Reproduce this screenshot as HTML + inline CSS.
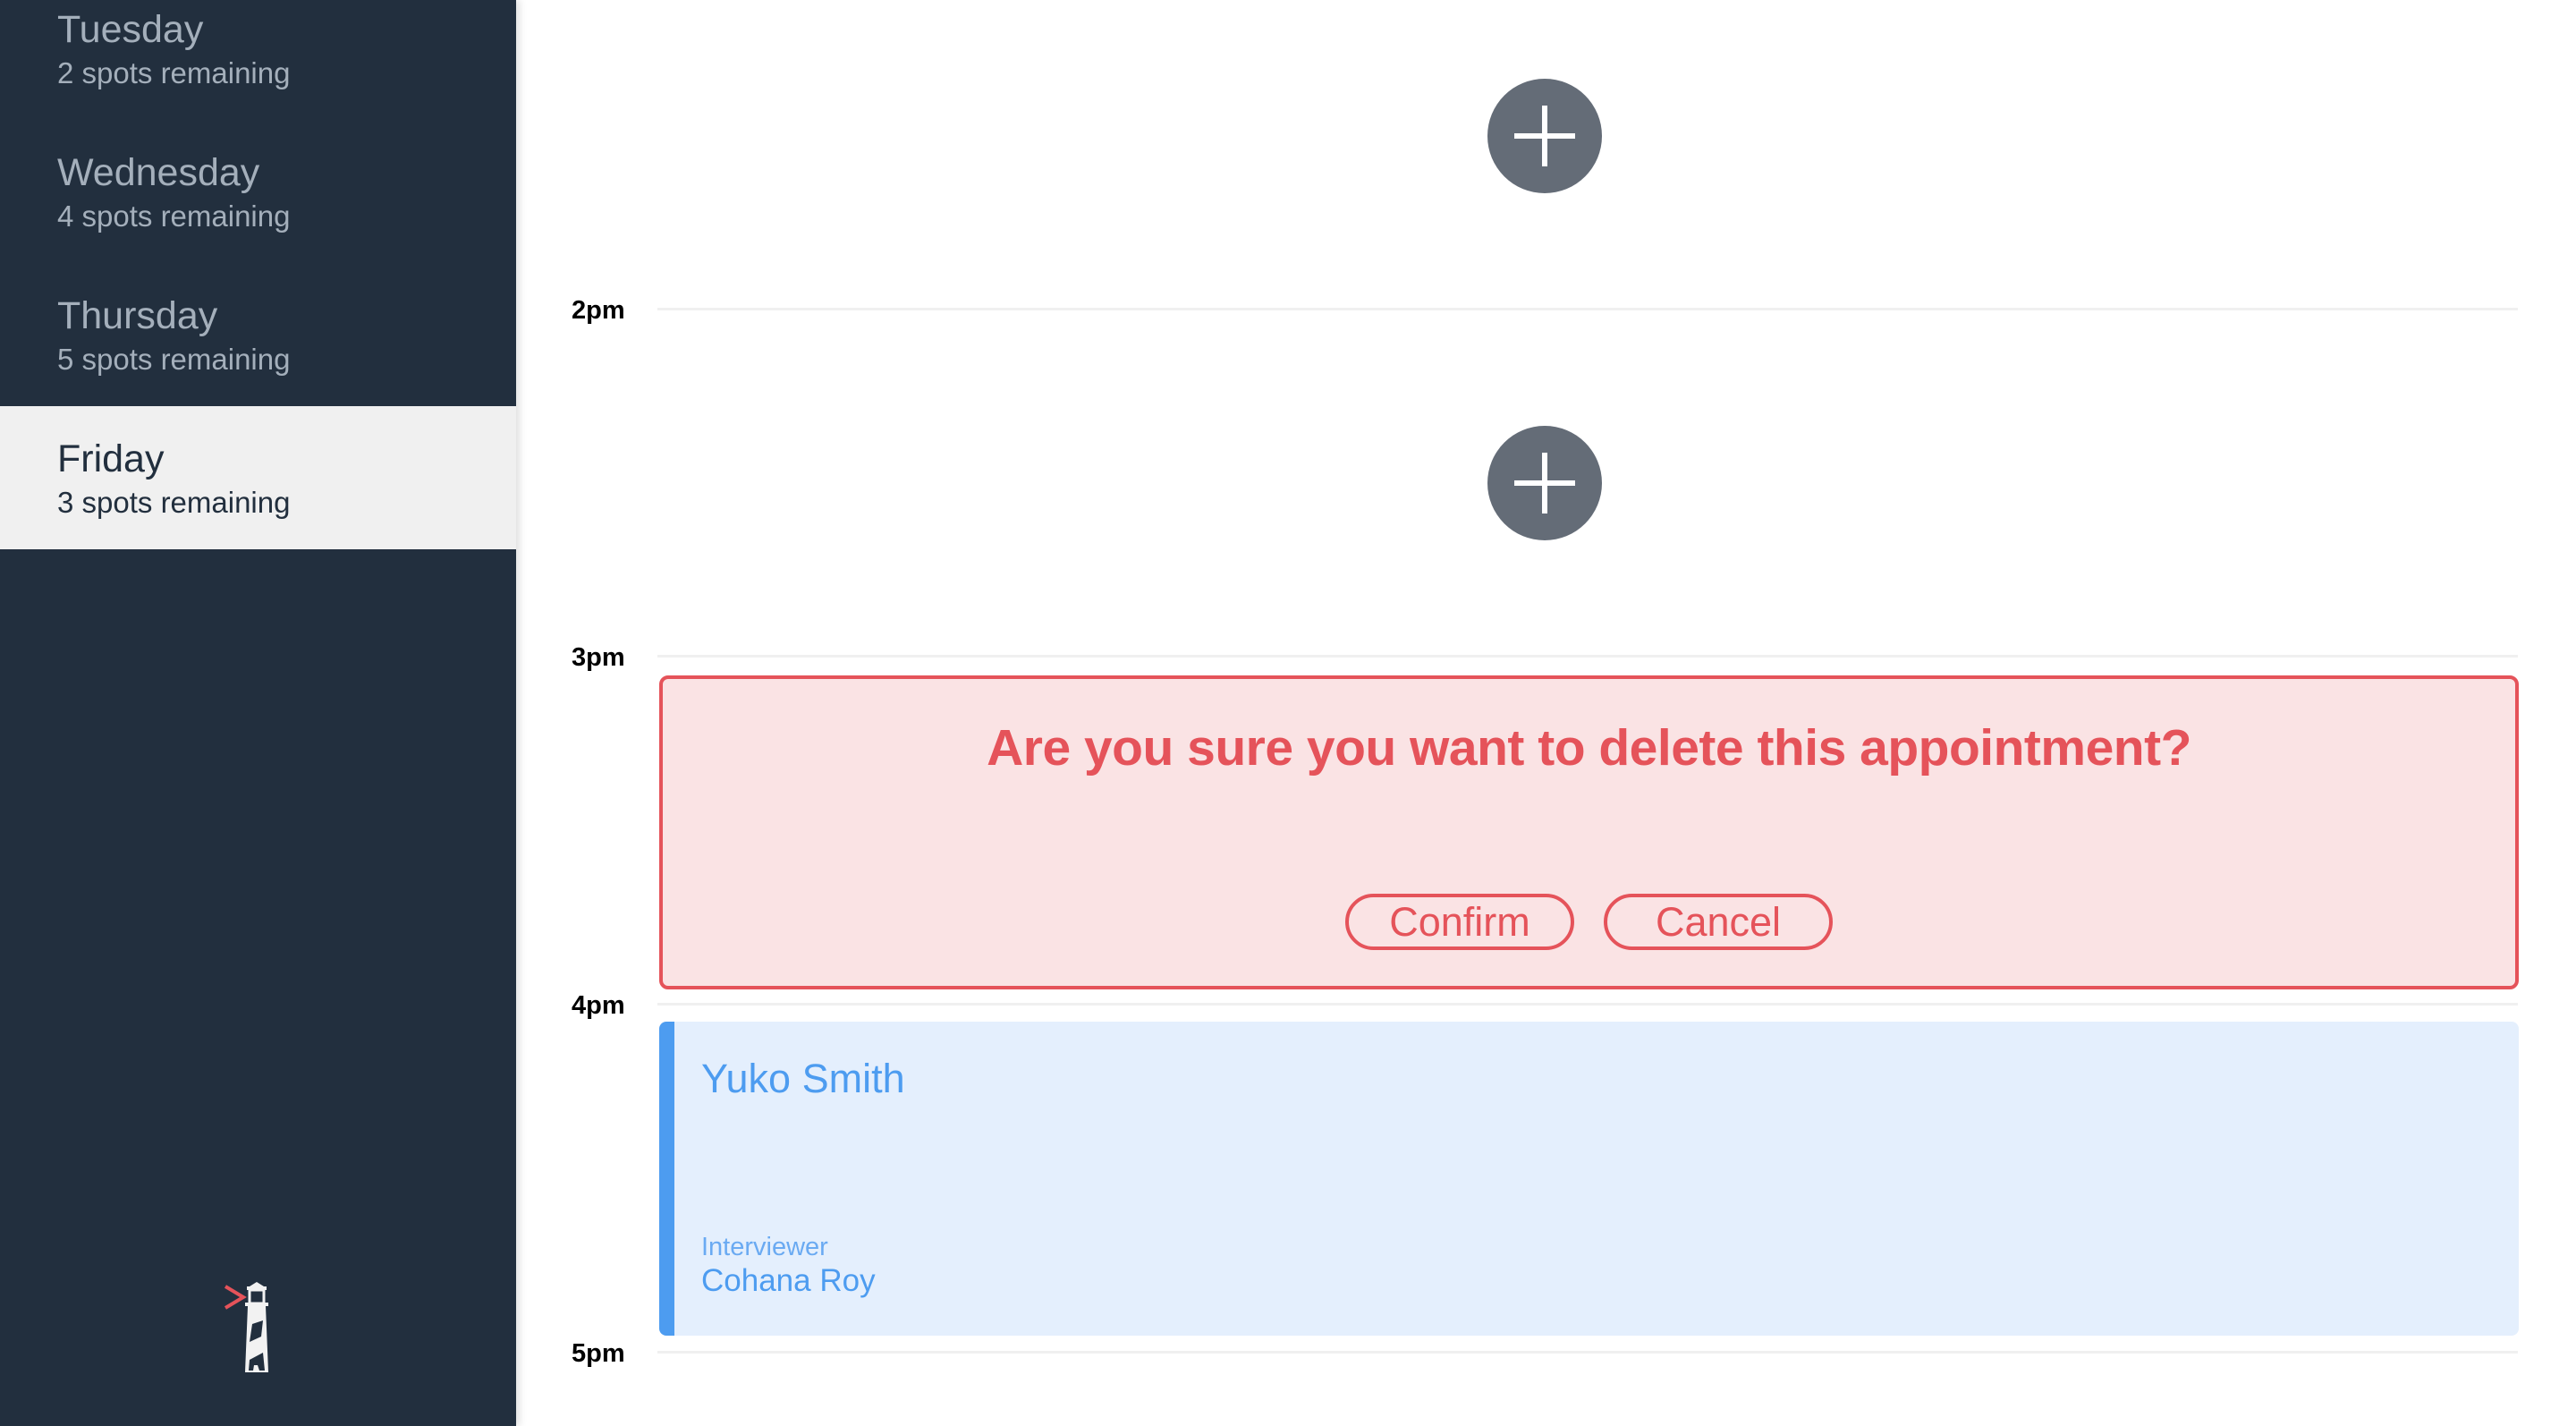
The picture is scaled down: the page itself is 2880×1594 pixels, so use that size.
<!DOCTYPE html>
<html><head><meta charset="utf-8"><style>
*{margin:0;padding:0;box-sizing:border-box}
body{width:2880px;height:1594px;overflow:hidden;background:#fff;font-family:"Liberation Sans",sans-serif;position:relative}
#side{position:absolute;left:0;top:0;width:577px;height:1594px;background:#222f3e;box-shadow:4px 0 8px rgba(0,0,0,.12);z-index:2}
.day{position:absolute;left:0;width:577px;height:160px}
.day .t{position:absolute;left:64px;top:34px;font-size:43px;color:#a4afbb;line-height:50px}
.day .s{position:absolute;left:64px;top:88px;font-size:33px;color:#a4afbb;line-height:40px}
.sel{background:#f0f0f0}
.sel .t,.sel .s{color:#222f3e}
.tl{position:absolute;left:639px;font-size:29px;font-weight:bold;color:#000;line-height:30px}
.ln{position:absolute;left:735px;width:2080px;height:3px;background:#f0f0f0}
.plus{position:absolute;left:1663px;width:128px;height:128px;border-radius:50%;background:#646c77}
.plus:before{content:"";position:absolute;left:30px;top:61px;width:68px;height:6px;background:#fff}
.plus:after{content:"";position:absolute;left:61px;top:30px;width:6px;height:68px;background:#fff}
#del{position:absolute;left:737px;top:755px;width:2079px;height:351px;background:#fae3e4;border:4px solid #e5535a;border-radius:10px}
#del h1{position:absolute;left:0;right:0;top:44px;text-align:center;font-size:57px;font-weight:bold;color:#e5535a;letter-spacing:-0.5px}
.btn{position:absolute;top:240px;width:256px;height:63px;border:4px solid #e5535a;border-radius:32px;color:#e5535a;font-size:45px;text-align:center;line-height:55px}
#ap{position:absolute;left:737px;top:1142px;width:2079px;height:351px;background:#e4effd;border-left:17px solid #4d9cf0;border-radius:8px}
</style></head><body>
<div id="side">
<div class="day" style="top:-26px"><div class="t">Tuesday</div><div class="s">2 spots remaining</div></div>
<div class="day" style="top:134px"><div class="t">Wednesday</div><div class="s">4 spots remaining</div></div>
<div class="day" style="top:294px"><div class="t">Thursday</div><div class="s">5 spots remaining</div></div>
<div class="day sel" style="top:454px"><div class="t">Friday</div><div class="s">3 spots remaining</div></div>
<svg style="position:absolute;left:246px;top:1432px" width="70" height="105" viewBox="0 0 70 105">
<polyline points="6,6 26,18 6,30" fill="none" stroke="#e5535a" stroke-width="4"/>
<polygon points="33,6 41,1 49,6" fill="#f2f2f2"/>
<rect x="30" y="6" width="22" height="4" fill="#f2f2f2"/>
<rect x="33" y="10" width="16" height="15" fill="none" stroke="#f2f2f2" stroke-width="3"/>
<rect x="28" y="24" width="26" height="4" fill="#f2f2f2"/>
<polygon points="31,28 51,28 54,102 28,102" fill="#f2f2f2"/>
<polygon points="36,48 48,44 46,62 33,68" fill="#222f3e"/>
<polygon points="33,88 48,80 50,100 44,100 42,94 38,94 37,100 32,100" fill="#222f3e"/>
</svg>
</div>
<div class="plus" style="top:88px"></div>
<div class="plus" style="top:476px"></div>
<div class="tl" style="top:332px">2pm</div><div class="ln" style="top:344px"></div>
<div class="tl" style="top:720px">3pm</div><div class="ln" style="top:732px"></div>
<div class="tl" style="top:1109px">4pm</div><div class="ln" style="top:1121px"></div>
<div class="tl" style="top:1498px">5pm</div><div class="ln" style="top:1510px"></div>
<div id="del"><h1>Are you sure you want to delete this appointment?</h1>
<div class="btn" style="left:763px">Confirm</div><div class="btn" style="left:1052px">Cancel</div></div>
<div id="ap">
<div style="position:absolute;left:30px;top:38px;font-size:45px;color:#4d9cf0">Yuko Smith</div>
<div style="position:absolute;left:30px;top:236px;font-size:29px;color:#6aaaf2">Interviewer</div>
<div style="position:absolute;left:30px;top:270px;font-size:35px;color:#4d9cf0">Cohana Roy</div>
</div>
</body></html>
